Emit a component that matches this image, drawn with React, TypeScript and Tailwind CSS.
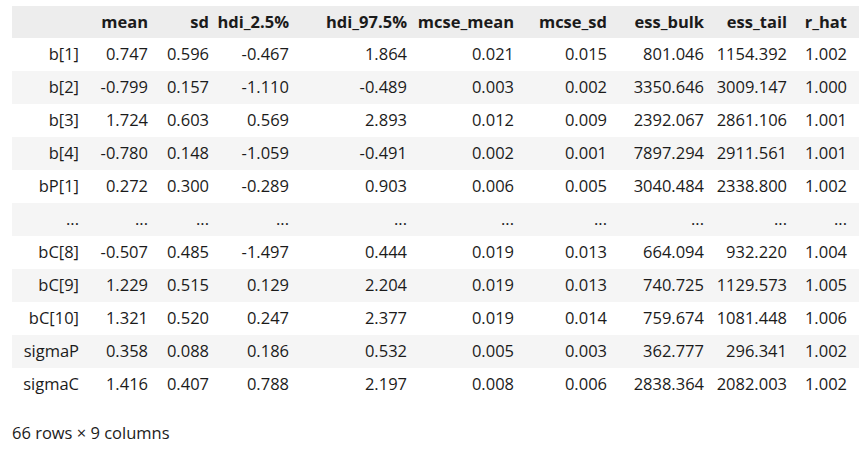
const COLS = ["mean", "sd", "hdi_2.5%", "hdi_97.5%", "mcse_mean", "mcse_sd", "ess_bulk", "ess_tail", "r_hat"];

// column widths, index column first
const WIDTHS = [
  "w-[73px]", "w-[69px]", "w-[61px]", "w-[80px]", "w-[118px]",
  "w-[107px]", "w-[93px]", "w-[97px]", "w-[83px]", "w-[66px]",
];

const ROWS: [string, string[]][] = [
  ["b[1]", ["0.747", "0.596", "-0.467", "1.864", "0.021", "0.015", "801.046", "1154.392", "1.002"]],
  ["b[2]", ["-0.799", "0.157", "-1.110", "-0.489", "0.003", "0.002", "3350.646", "3009.147", "1.000"]],
  ["b[3]", ["1.724", "0.603", "0.569", "2.893", "0.012", "0.009", "2392.067", "2861.106", "1.001"]],
  ["b[4]", ["-0.780", "0.148", "-1.059", "-0.491", "0.002", "0.001", "7897.294", "2911.561", "1.001"]],
  ["bP[1]", ["0.272", "0.300", "-0.289", "0.903", "0.006", "0.005", "3040.484", "2338.800", "1.002"]],
  ["...", ["...", "...", "...", "...", "...", "...", "...", "...", "..."]],
  ["bC[8]", ["-0.507", "0.485", "-1.497", "0.444", "0.019", "0.013", "664.094", "932.220", "1.004"]],
  ["bC[9]", ["1.229", "0.515", "0.129", "2.204", "0.019", "0.013", "740.725", "1129.573", "1.005"]],
  ["bC[10]", ["1.321", "0.520", "0.247", "2.377", "0.019", "0.014", "759.674", "1081.448", "1.006"]],
  ["sigmaP", ["0.358", "0.088", "0.186", "0.532", "0.005", "0.003", "362.777", "296.341", "1.002"]],
  ["sigmaC", ["1.416", "0.407", "0.788", "2.197", "0.008", "0.006", "2838.364", "2082.003", "1.002"]],
];

const cellPad = (i: number) => (i === 9 ? "pl-0 pr-[12px]" : "pl-0 pr-[6px]");

export default function App() {
  return (
    <div
      className="min-h-[452px] w-[866px] bg-white pt-[6px] pl-[12px] text-[#1b1b1b] text-[16.5px]"
      style={{ fontFamily: '"Open Sans", "Noto Sans", sans-serif' }}
    >
      <table className="table-fixed border-collapse w-[847px]">
        <thead>
          <tr className="bg-[#ededed] h-[32px]">
            <th className={`${WIDTHS[0]} ${cellPad(0)}`} />
            {COLS.map((c, i) => (
              <th
                key={c}
                className={`${WIDTHS[i + 1]} ${cellPad(i + 1)} text-right font-bold whitespace-nowrap`}
              >
                {c}
              </th>
            ))}
          </tr>
        </thead>
        <tbody>
          {ROWS.map(([idx, vals], r) => (
            <tr key={idx + r} className={r % 2 === 1 ? "bg-[#f5f5f5] h-[33px]" : "bg-white h-[33px]"}>
              <td className={`${cellPad(0)} text-right whitespace-nowrap`}>{idx}</td>
              {vals.map((v, i) => (
                <td key={i} className={`${cellPad(i + 1)} text-right whitespace-nowrap`}>
                  {v}
                </td>
              ))}
            </tr>
          ))}
        </tbody>
      </table>
      <p className="mt-[21px] leading-[22px]">66 rows × 9 columns</p>
    </div>
  );
}
